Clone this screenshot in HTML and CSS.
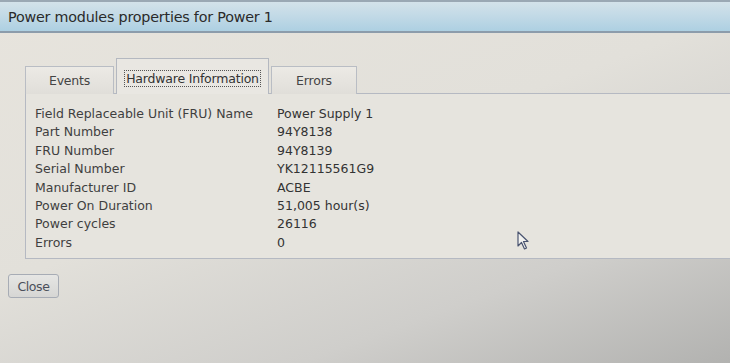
FILE: index.html
```html
<!DOCTYPE html>
<html>
<head>
<meta charset="utf-8">
<link rel="stylesheet" href="styles.css">
</head>
<body>
<div class="screen">
  <div class="titlebar">Power modules properties for Power 1</div>
  <div class="content">
    <div class="tabs">
      <div class="tab">Events</div>
      <div class="tab active"><span class="focus">Hardware Information</span></div>
      <div class="tab">Errors</div>
    </div>
    <div class="panel">
      <div class="grid">
        <div class="k">Field Replaceable Unit (FRU) Name</div><div class="v">Power Supply 1</div>
        <div class="k">Part Number</div><div class="v">94Y8138</div>
        <div class="k">FRU Number</div><div class="v">94Y8139</div>
        <div class="k">Serial Number</div><div class="v">YK12115561G9</div>
        <div class="k">Manufacturer ID</div><div class="v">ACBE</div>
        <div class="k">Power On Duration</div><div class="v">51,005 hour(s)</div>
        <div class="k">Power cycles</div><div class="v">26116</div>
        <div class="k">Errors</div><div class="v">0</div>
      </div>
    </div>
    <div class="actions">
      <button class="btn">Close</button>
    </div>
  </div>
  <svg class="cursor" width="14" height="20" viewBox="0 0 14 20">
    <path d="M1 1 L1 15 L4.5 11.5 L7.5 18 L9.5 17 L6.5 10.5 L11 10.5 Z" fill="#f2f2f0" stroke="#4a5470" stroke-width="1.2" stroke-linejoin="round"/>
  </svg>
</div>
</body>
</html>
```
FILE: styles.css
```css
html, body {
  margin: 0;
  padding: 0;
}
body {
  width: 730px;
  height: 363px;
  overflow: hidden;
  font-family: "DejaVu Sans", Verdana, sans-serif;
  color: #3c3c3c;
}
.screen {
  position: relative;
  width: 730px;
  height: 363px;
  background: linear-gradient(160deg, #e7e4dd 0%, #e2e0da 45%, #cfcecb 75%, #b2b2b0 100%);
}
.titlebar {
  height: 33px;
  box-sizing: border-box;
  border-top: 2px solid #9aa8b4;
  border-bottom: 2px solid #8c9cab;
  background: linear-gradient(180deg, #d3e2ea 0%, #c1d9e6 50%, #add0e2 100%);
  padding: 7px 0 0 8px;
  font-size: 14.3px;
  color: #2a2a2a;
  letter-spacing: -0.2px;
}
.content {
  padding: 26px 0 0 25px;
}
.tabs {
  display: flex;
  align-items: flex-end;
  height: 35px;
  margin-bottom: -1px;
  position: relative;
  z-index: 1;
}
.tab {
  box-sizing: border-box;
  height: 28px;
  border: 1px solid #b9bdc4;
  border-bottom: none;
  background: linear-gradient(180deg, #eceae5, #e0ded9);
  font-size: 12.5px;
  color: #444;
  display: flex;
  align-items: center;
  justify-content: center;
  letter-spacing: -0.2px;
}
.tab:nth-child(1) { width: 89px; }
.tab:nth-child(3) { width: 86px; margin-left: 2px; }
.tab.active {
  height: 36px;
  width: 153px;
  margin-left: 2px;
  background: #e9e7e2;
  border-color: #b4b8c0;
  padding-top: 4px;
  color: #333;
}
.focus {
  border: 1px dotted #555;
  padding: 0 1px;
}
.panel {
  border: 1px solid #b5b9c2;
  border-right: none;
  background: #e6e4de;
  height: 166px;
  box-sizing: border-box;
  padding: 11px 0 0 9px;
}
.grid {
  display: grid;
  grid-template-columns: 242px auto;
  row-gap: 0;
  font-size: 12.5px;
  line-height: 18.4px;
  letter-spacing: 0;
}
.k { color: #3f3f3f; }
.v { color: #333; }
.actions {
  padding: 15px 0 0 0;
  margin-left: -17px;
}
.btn {
  font-family: "DejaVu Sans", Verdana, sans-serif;
  font-size: 12.5px;
  letter-spacing: -0.4px;
  color: #4a4f5a;
  width: 51px;
  height: 24px;
  border: 1px solid #a7acb5;
  border-radius: 3px;
  background: linear-gradient(180deg, #e6e6e4, #d6d6d4);
  padding: 0;
}
.cursor {
  position: absolute;
  left: 517px;
  top: 231px;
}
```
